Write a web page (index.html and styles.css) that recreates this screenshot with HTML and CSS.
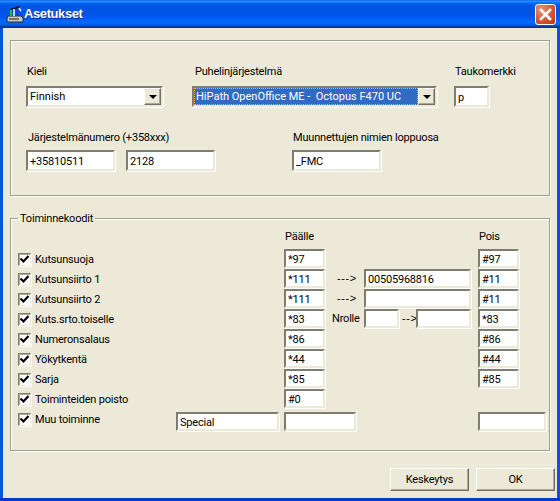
FILE: index.html
```html
<!DOCTYPE html>
<html lang="fi">
<head>
<meta charset="utf-8">
<title>Asetukset</title>
<link rel="stylesheet" href="styles.css">
</head>
<body>
<div class="window">
  <header class="titlebar">
    <svg class="app-icon" width="18" height="18" viewBox="0 0 18 18">
      <path d="M2 11h13l2 2v4H1v-4z" fill="#c8c8c0" stroke="#2a2a2a" stroke-width="1"/>
      <path d="M3 14h10" stroke="#707068" stroke-width="2"/>
      <path d="M4 4l9-3 1 1.500-9 3z" fill="#101010"/>
      <path d="M5 5v6" stroke="#18c020" stroke-width="2"/>
      <path d="M8 4v7" stroke="#fff" stroke-width="1.500"/>
      <path d="M11 4v7" stroke="#1838d8" stroke-width="2"/>
      <path d="M13 3l2 3" stroke="#e8e8e8" stroke-width="1.500"/>
    </svg>
    <h1 class="title">Asetukset</h1>
    <span class="close">
      <svg width="13" height="13" viewBox="0 0 13 13"><path d="M2 2l9 9M11 2l-9 9" stroke="#fff" stroke-width="2.600" stroke-linecap="square"/></svg>
    </span>
  </header>
  <main class="client">
    <fieldset class="group group-settings">
      <div class="settings-row settings-row-top">
        <div class="field field-lang">
          <label class="cap">Kieli</label>
          <div class="combo">
            <span class="combo-value">Finnish</span>
            <span class="combo-btn"><i class="tri"></i></span>
          </div>
        </div>
        <div class="field field-system">
          <label class="cap">Puhelinjärjestelmä</label>
          <div class="combo">
            <span class="combo-value selected">HiPath OpenOffice ME -  Octopus F470 UC</span>
            <span class="combo-btn"><i class="tri"></i></span>
          </div>
        </div>
        <div class="field field-pause">
          <label class="cap">Taukomerkki</label>
          <input class="txt" value="p">
        </div>
      </div>
      <div class="settings-row settings-row-bottom">
        <div class="field field-number">
          <label class="cap">Järjestelmänumero (+358xxx)</label>
          <div class="pair">
            <input class="txt w89" value="+35810511">
            <input class="txt w89" value="2128">
          </div>
        </div>
        <div class="field field-suffix">
          <label class="cap">Muunnettujen nimien loppuosa</label>
          <input class="txt w89" value="_FMC">
        </div>
      </div>
    </fieldset>

    <fieldset class="group group-codes">
      <legend class="legend">Toiminnekoodit</legend>
      <div class="code-row code-head">
        <span class="head c-on">Päälle</span>
        <span class="head c-off">Pois</span>
      </div>
      <div class="code-row">
        <label class="chk c-name"><span class="box"><svg width="11" height="11" viewBox="0 0 11 11"><path d="M1.500 4.500l3 3 5-5.500" fill="none" stroke="#000" stroke-width="2.200"/></svg></span>Kutsunsuoja</label>
        <input class="txt c-on" value="*97">
        <input class="txt c-off" value="#97">
      </div>
      <div class="code-row">
        <label class="chk c-name"><span class="box"><svg width="11" height="11" viewBox="0 0 11 11"><path d="M1.500 4.500l3 3 5-5.500" fill="none" stroke="#000" stroke-width="2.200"/></svg></span>Kutsunsiirto 1</label>
        <input class="txt c-on" value="*111">
        <span class="arrow c-arrow">---&gt;</span>
        <input class="txt c-target" value="00505968816">
        <input class="txt c-off" value="#11">
      </div>
      <div class="code-row">
        <label class="chk c-name"><span class="box"><svg width="11" height="11" viewBox="0 0 11 11"><path d="M1.500 4.500l3 3 5-5.500" fill="none" stroke="#000" stroke-width="2.200"/></svg></span>Kutsunsiirto 2</label>
        <input class="txt c-on" value="*111">
        <span class="arrow c-arrow">---&gt;</span>
        <input class="txt c-target" value="">
        <input class="txt c-off" value="#11">
      </div>
      <div class="code-row">
        <label class="chk c-name"><span class="box"><svg width="11" height="11" viewBox="0 0 11 11"><path d="M1.500 4.500l3 3 5-5.500" fill="none" stroke="#000" stroke-width="2.200"/></svg></span>Kuts.srto.toiselle</label>
        <input class="txt c-on" value="*83">
        <span class="arrow c-nrolle">Nrolle</span>
        <input class="txt c-from" value="">
        <span class="arrow c-mid">--&gt;</span>
        <input class="txt c-to" value="">
        <input class="txt c-off" value="*83">
      </div>
      <div class="code-row">
        <label class="chk c-name"><span class="box"><svg width="11" height="11" viewBox="0 0 11 11"><path d="M1.500 4.500l3 3 5-5.500" fill="none" stroke="#000" stroke-width="2.200"/></svg></span>Numeronsalaus</label>
        <input class="txt c-on" value="*86">
        <input class="txt c-off" value="#86">
      </div>
      <div class="code-row">
        <label class="chk c-name"><span class="box"><svg width="11" height="11" viewBox="0 0 11 11"><path d="M1.500 4.500l3 3 5-5.500" fill="none" stroke="#000" stroke-width="2.200"/></svg></span>Yökytkentä</label>
        <input class="txt c-on" value="*44">
        <input class="txt c-off" value="#44">
      </div>
      <div class="code-row">
        <label class="chk c-name"><span class="box"><svg width="11" height="11" viewBox="0 0 11 11"><path d="M1.500 4.500l3 3 5-5.500" fill="none" stroke="#000" stroke-width="2.200"/></svg></span>Sarja</label>
        <input class="txt c-on" value="*85">
        <input class="txt c-off" value="#85">
      </div>
      <div class="code-row">
        <label class="chk c-name"><span class="box"><svg width="11" height="11" viewBox="0 0 11 11"><path d="M1.500 4.500l3 3 5-5.500" fill="none" stroke="#000" stroke-width="2.200"/></svg></span>Toiminteiden poisto</label>
        <input class="txt c-on" value="#0">
      </div>
      <div class="code-row code-last">
        <label class="chk c-name"><span class="box"><svg width="11" height="11" viewBox="0 0 11 11"><path d="M1.500 4.500l3 3 5-5.500" fill="none" stroke="#000" stroke-width="2.200"/></svg></span>Muu toiminne</label>
        <input class="txt c-special" value="Special">
        <input class="txt c-on-wide" value="">
        <input class="txt c-off-wide" value="">
      </div>
    </fieldset>

    <footer class="actions">
      <button class="btn" type="button">Keskeytys</button>
      <button class="btn" type="button">OK</button>
    </footer>
  </main>
</div>
</body>
</html>
```

FILE: styles.css
```css
* { box-sizing: border-box; }
html, body { margin: 0; padding: 0; height: 100%; }
body {
  font: 11px/13px Roboto, "Liberation Sans", Arial, sans-serif;
  letter-spacing: -0.2px;
  color: #000;
  background: #0855dd;
}
.window {
  width: 560px;
  height: 501px;
  display: flex;
  flex-direction: column;
  background: #0855dd;
  border-bottom: 3px solid #0038c8;
}
.titlebar {
  height: 28px;
  flex: none;
  display: flex;
  align-items: center;
  padding: 0 4px 0 6px;
  background: linear-gradient(180deg, #0058ee 0%, #3593ff 4%, #288eff 6%, #127dff 8%, #036ffc 10%, #0262ee 14%, #0057e5 20%, #0054e3 24%, #0055eb 56%, #005bf5 66%, #026afe 76%, #0062ef 86%, #0052d6 92%, #0040ab 94%, #003092 100%);
}
.app-icon { flex: none; margin-right: 0; }
.title {
  margin: 0;
  flex: 1;
  font: bold 13px/16px "Liberation Sans", Arial, sans-serif;
  letter-spacing: -0.4px;
  color: #fff;
  text-shadow: 1px 1px 0 #0f2a9a;
}
.close {
  flex: none;
  width: 21px;
  height: 21px;
  display: flex;
  align-items: center;
  justify-content: center;
  border: 1px solid #fff;
  border-radius: 3px;
  background: radial-gradient(circle at 30% 25%, #e8917a 0%, #d9603c 45%, #b8330f 100%);
}
.client {
  flex: 1;
  margin: 0 3px;
  padding: 12px 7px 0;
  background: #ece9d8;
  display: flex;
  flex-direction: column;
}
.group {
  margin: 0;
  min-width: 0;
  border: 1px solid #a09f90;
  box-shadow: 1px 1px 0 #fff, inset 1px 1px 0 #fff;
}
.group-settings {
  height: 156px;
  padding: 24px 0 0 15px;
}
.group-codes {
  height: 239px;
  margin-top: 16px;
  padding: 5px 0 0 7px;
}
.legend {
  margin-left: 0;
  padding: 0 2px;
  height: 13px;
}
.settings-row { display: flex; }
.settings-row-top { height: 44px; margin-bottom: 22px; }
.field { display: flex; flex-direction: column; }
.cap { height: 21px; padding-left: 1px; white-space: nowrap; }
.field-system .cap { padding-left: 3px; }
.settings-row-bottom .cap { height: 19px; padding-left: 2px; }
.field-suffix .cap, .settings-row-bottom .field-suffix .cap { padding-left: 1px; }
.field-lang { width: 137px; margin-right: 29px; }
.field-system { width: 245px; margin-right: 17px; }
.field-pause { width: 35px; }
.field-pause .txt { height: 21px; width: 35px; }
.field-number { width: 189px; margin-right: 77px; }
.field-suffix { width: 89px; }
.pair { display: flex; gap: 11px; }
.w89 { width: 89px; height: 21px; }
.txt {
  display: block;
  margin: 0;
  min-width: 0;
  padding: 1px 0 0 2px;
  font: 11px/13px Roboto, "Liberation Sans", Arial, sans-serif;
  letter-spacing: -0.2px;
  color: #000;
  background: #fff;
  border: 2px solid;
  border-color: #7f7d6f #ece9d8 #ece9d8 #7f7d6f;
  box-shadow: 1px 1px 0 #fff;
  outline: none;
}
.combo {
  height: 21px;
  display: flex;
  background: #fff;
  border: 2px solid;
  border-color: #7f7d6f #ece9d8 #ece9d8 #7f7d6f;
  box-shadow: 1px 1px 0 #fff;
}
.combo-value {
  flex: 1;
  min-width: 0;
  padding: 2px 0 0 2px;
  white-space: pre;
  overflow: hidden;
  letter-spacing: 0;
}
.combo-value.selected {
  padding: 1px 0 0 1px;
  background: #316ac5;
  color: #fff;
  border: 1px dotted #e8b060;
}
.combo-btn {
  flex: none;
  width: 17px;
  display: flex;
  align-items: center;
  justify-content: center;
  background: #ece9d8;
  border: 1px solid;
  border-color: #fff #716f64 #716f64 #fff;
  box-shadow: inset -1px -1px 0 #aca899;
}
.tri {
  width: 0;
  height: 0;
  border: 4px solid transparent;
  border-top-color: #000;
  border-bottom-width: 0;
}
.code-row {
  display: grid;
  grid-template-columns: 158px 103px 5px 41px 7px 32px 35px 17px 55px 7px 41px 27px;
  height: 20px;
}
.code-head { height: 19px; }
.code-last { height: 22px; margin-top: 0; }
.head { padding-left: 1px; }
.c-name { grid-column: 1; }
.c-special { grid-column: 2; }
.c-on { grid-column: 4; }
.c-on-wide { grid-column: 4 / 7; width: 72px; }
.c-arrow { grid-column: 5 / 7; padding-left: 12px; letter-spacing: 0.6px; font-family: "Liberation Sans", Arial, sans-serif; }
.c-nrolle { grid-column: 5 / 7; padding-left: 7px; }
.c-target { grid-column: 7 / 10; }
.c-from { grid-column: 7; }
.c-mid { grid-column: 8; padding-left: 3px; letter-spacing: 0.6px; font-family: "Liberation Sans", Arial, sans-serif; }
.c-to { grid-column: 9; }
.c-off { grid-column: 11; }
.c-off-wide { grid-column: 11 / 13; }
.code-row .txt { height: 19px; width: 100%; }
.code-row .c-on-wide { width: 72px; }
.code-last .txt { align-self: end; }
.arrow { display: flex; align-items: center; height: 19px; white-space: nowrap; }
.chk {
  display: flex;
  align-items: center;
  gap: 4px;
  height: 20px;
  padding-top: 1px;
}
.code-last .chk { height: 18px; margin-top: 1px; }
.box {
  flex: none;
  width: 13px;
  height: 13px;
  display: flex;
  align-items: center;
  justify-content: center;
  background: #fff;
  border: 1px solid;
  border-color: #7f7d6f #ece9d8 #ece9d8 #7f7d6f;
  box-shadow: 1px 1px 0 #fff, inset 1px 1px 0 #aca899;
}
.actions {
  display: flex;
  justify-content: flex-end;
  gap: 7px;
  margin-top: 17px;
  margin-right: -5px;
}
.btn {
  width: 79px;
  height: 23px;
  padding: 0;
  font: 11px/13px Roboto, "Liberation Sans", Arial, sans-serif;
  letter-spacing: -0.2px;
  color: #000;
  background: #ece9d8;
  border: 1px solid;
  border-color: #fff #716f64 #716f64 #fff;
  box-shadow: inset -1px -1px 0 #aca899;
}
```
